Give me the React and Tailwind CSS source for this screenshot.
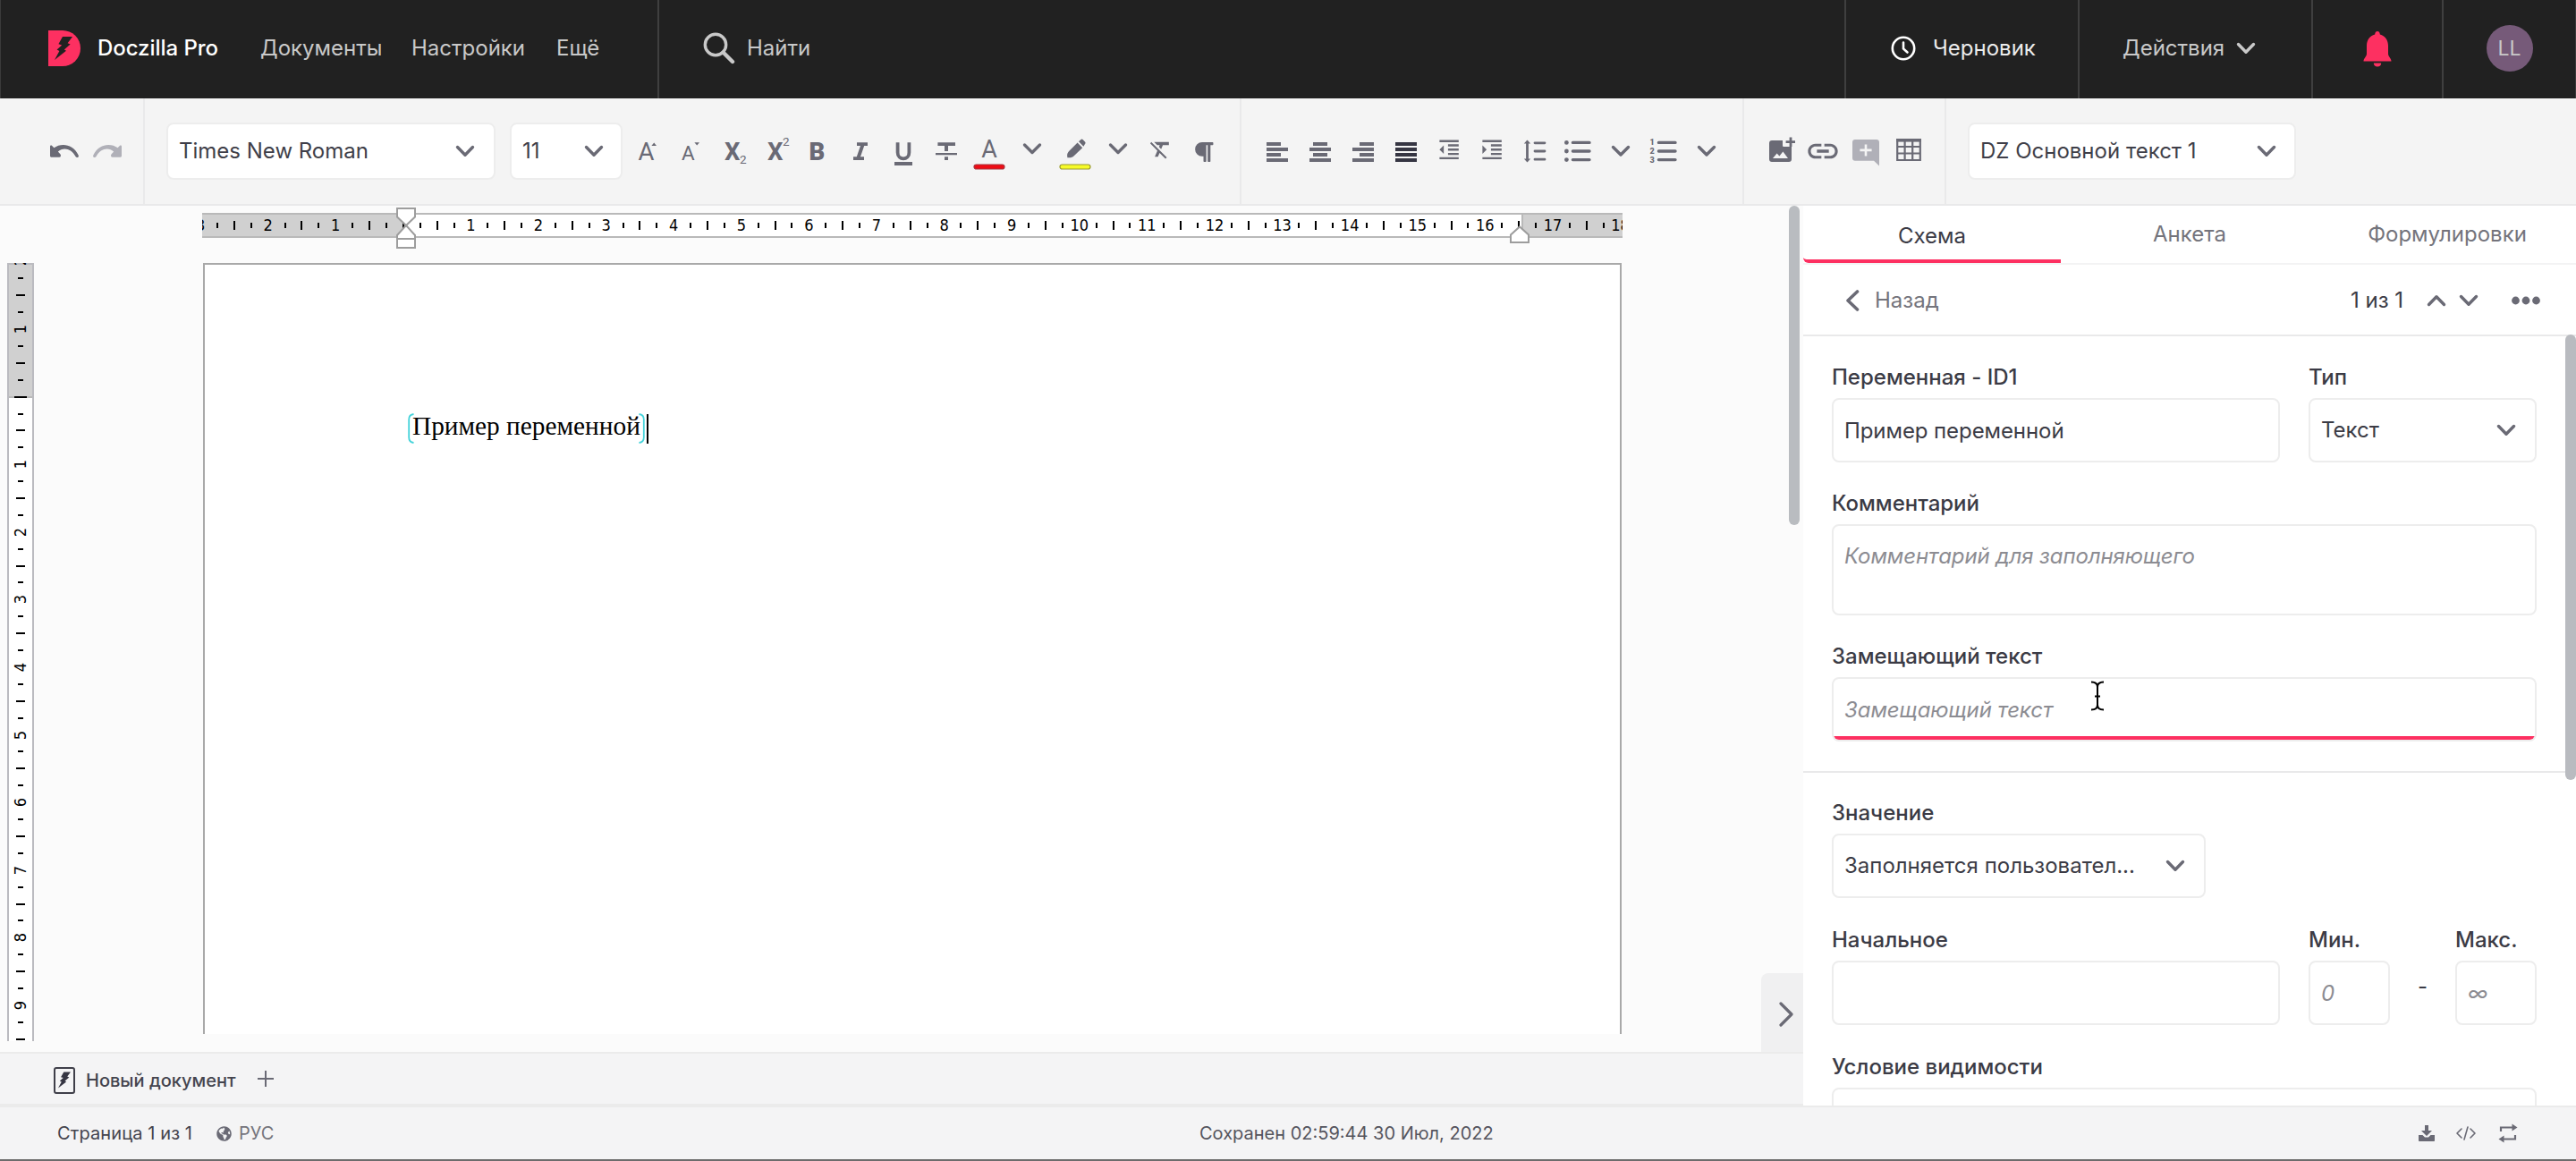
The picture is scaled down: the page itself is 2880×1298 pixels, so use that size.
import React from "react";
import { MdFormatClear, MdFormatIndentDecrease, MdFormatIndentIncrease, MdLink } from "react-icons/md";
import { FaParagraph, FaGlobeAmericas } from "react-icons/fa";

function Chevron({ dir = "down", className = "w-[22px] h-[14px]" }) {
    const d = {
        down: "M2.5 2.5L11 11.2L19.5 2.5",
        up: "M2.5 11.5L11 2.8L19.5 11.5",
    }[dir];
    return (
        <svg viewBox="0 0 22 14" className={`${className} shrink-0`} fill="none" stroke="currentColor" strokeWidth="3.4" strokeLinecap="round" strokeLinejoin="round">
            <path d={d} />
        </svg>
    );
}

function Tool({ children, className = "text-[#6a6a75]" }) {
    return (
        <button className={`w-12 h-12 shrink-0 ${className}`}>
            <svg viewBox="0 0 48 48" className="w-12 h-12 block" fill="currentColor">
                {children}
            </svg>
        </button>
    );
}

function Letter({ x, y, size, weight = 400, children }) {
    return (
        <text x={x} y={y} fontSize={size} fontWeight={weight} fontFamily="Roboto, sans-serif">
            {children}
        </text>
    );
}

function ToolChevron({ y = 24 }) {
    return (
        <Tool>
            <path d={`M15.5 ${y - 5}L24 ${y + 3.5}L32.5 ${y - 5}`} fill="none" stroke="currentColor" strokeWidth="3.4" strokeLinecap="round" strokeLinejoin="round" />
        </Tool>
    );
}

function Bars({ rows }) {
    return rows.map(([x, w], i) => <rect key={i} x={x} y={14 + i * 6} width={w} height="4" />);
}

function Bolt({ className }) {
    return (
        <svg viewBox="0 0 20 26" className={className} fill="currentColor">
            <path d="M9 0L20 0L14.6 7.2L17.6 8.6L10.8 14.4L13 15.8L0 26L5.4 16L2.6 14.4L8.2 9.4L4.4 8.2Z" />
        </svg>
    );
}

const UNDO = "M8 18.7C8 17.5 9.4 17.2 10.2 18L12.4 20.2C20 14.7 33.5 15.2 39.7 28.4C40.7 30.8 37.7 32.2 36.5 30C31.6 20.8 22.6 19.2 16.8 24.6L19.4 27.2C20.6 28.6 20 30.7 18.2 30.7H9.6C8.6 30.7 8 30 8 29.2Z";

function Header() {
    return (
        <header className="h-[110px] shrink-0 bg-[#212121] text-[#c9c9c9] text-2xl flex border-x border-[#3a3a3a]">
            <div className="w-[736px] border-r-2 border-[#3f3f3f] flex items-center pl-[53px]">
                <div className="w-9 h-10 bg-[#fd3061] rounded-r-[20px] mr-[19px] -mt-[2px] flex items-center justify-center text-[#212121]">
                    <Bolt className="w-5 h-[26px] -ml-[3px]" />
                </div>
                <div className="w-[182px] text-white font-medium tracking-[-0.05px] -mt-[2px]">Doczilla Pro</div>
                <nav className="flex -mt-[2px]">
                    <div className="w-[169px]">Документы</div>
                    <div className="w-[162px]">Настройки</div>
                    <div>Ещё</div>
                </nav>
            </div>
            <div className="flex-1 flex items-center pl-[49px] pb-[2px]">
                <svg viewBox="0 0 36 36" className="w-9 h-9 mr-[13px]" fill="none" stroke="currentColor" strokeWidth="3.4" strokeLinecap="round">
                    <circle cx="14" cy="14" r="11.7" />
                    <path d="M22.5 22.5L33 33" strokeWidth="4.4" />
                </svg>
                Найти
            </div>
            <div className="w-[261px] border-l-2 border-[#3f3f3f] flex items-center pl-[50px] pb-[2px] text-[#ececec]">
                <svg viewBox="0 0 28 28" className="w-7 h-7 mr-[19px]" fill="none" stroke="white" strokeWidth="2.6" strokeLinecap="round">
                    <circle cx="14" cy="14" r="12.2" />
                    <path d="M14 7.5V14.5L18.5 18.5" />
                </svg>
                Черновик
            </div>
            <div className="w-[261px] border-l-2 border-[#3f3f3f] flex items-center pl-12 pb-[2px]">
                <span className="w-[127px]">Действия</span>
                <Chevron />
            </div>
            <div className="w-[146px] border-l-2 border-[#3f3f3f] flex items-center justify-center">
                <svg viewBox="0 0 32 40" className="w-8 h-10 text-[#fd3061]" fill="currentColor">
                    <path d="M16 0C17.8 0 18.8 1.6 18.8 3.6C24.6 5 28 10 28 16V25C28 28.5 31.5 30 31.5 33.6H0.5C0.5 30 4 28.5 4 25V16C4 10 7.4 5 13.2 3.6C13.2 1.6 14.2 0 16 0Z" />
                    <path d="M11.8 35.6H20.2C20.2 38 18.4 39.6 16 39.6S11.8 38 11.8 35.6Z" />
                </svg>
            </div>
            <div className="w-[149px] border-l-2 border-[#3f3f3f] flex items-center justify-center pb-[2px]">
                <div className="w-[52px] h-[52px] rounded-full bg-[#765a79] flex items-center justify-center text-[23px]">LL</div>
            </div>
        </header>
    );
}

function ToolbarSelect({ value, className }) {
    return (
        <div className={`h-[64px] bg-white border-2 border-[#ededed] rounded-[8px] flex items-center justify-between pl-3 text-2xl text-[#3f3f49] ${className}`}>
            <span>{value}</span>
            <Chevron className="w-[22px] h-[14px] text-[#6a6a75]" />
        </div>
    );
}

function Toolbar() {
    return (
        <div className="h-[120px] shrink-0 bg-[#f4f4f4] border-b-2 border-[#e9e9ea] flex items-stretch">
            <div className="w-[162px] border-r-2 border-[#e9e9ea] flex items-center pl-12">
                <Tool>
                    <path d={UNDO} />
                </Tool>
                <Tool className="text-[#b0b0b8]">
                    <path transform="translate(48 0) scale(-1 1)" d={UNDO} />
                </Tool>
            </div>
            <div className="w-[1226px] border-r-2 border-[#e9e9ea] flex items-center pl-6">
                <ToolbarSelect value="Times New Roman" className="w-[368px] mr-4 pr-[21px]" />
                <ToolbarSelect value="11" className="w-[126px] mr-[2px] pr-[19px]" />
                <Tool>
                    <Letter x="15.4" y="34" size="27.5">A</Letter>
                    <path d="M33.2 14.6L36 18H30.4Z" />
                </Tool>
                <Tool>
                    <Letter x="16" y="34" size="22.5">A</Letter>
                    <path d="M33.2 17.6L36 14.2H30.4Z" />
                </Tool>
                <Tool>
                    <Letter x="16" y="34" size="27.5" weight="700">X</Letter>
                    <Letter x="33" y="37.6" size="13.5">2</Letter>
                </Tool>
                <Tool>
                    <Letter x="16" y="34" size="27.5" weight="700">X</Letter>
                    <Letter x="33" y="17.8" size="13.5">2</Letter>
                </Tool>
                <Tool>
                    <Letter x="14.5" y="34" size="27.5" weight="900">B</Letter>
                </Tool>
                <Tool>
                    <path d="M20 14.2H32V18H28.2L24 30.2H28V34H16V30.2H19.8L24 18H20Z" />
                </Tool>
                <Tool>
                    <path d="M17.6 14.2V25.5C17.6 34.6 30.4 34.6 30.4 25.5V14.2" fill="none" stroke="currentColor" strokeWidth="3.8" />
                    <rect x="14" y="36" width="20" height="4" />
                </Tool>
                <Tool>
                    <path d="M14.4 14.2H34V18H26V24H22V18H14.4ZM12 26H36V28.2H12ZM22 30.2H26V34H22Z" />
                </Tool>
                <Tool>
                    <Letter x="15.2" y="30.6" size="27">A</Letter>
                    <rect x="7" y="39" width="34" height="5" rx="2.5" fill="#ee0c14" stroke="#a8323c" strokeWidth="1.2" />
                </Tool>
                <ToolChevron y={22} />
                <Tool>
                    <path d="M15.4 31.2C14.6 27.5 15.4 25.6 17.6 23.4L26.6 14.6L32.2 20.2L23 29C20.4 31.4 18.6 31.6 15.4 31.2Z" />
                    <path d="M28 13.2L30.2 11.2C31 10.4 32 10.4 32.8 11.2L35 13.4C35.8 14.2 35.8 15.2 35 16L33.4 18.8Z" />
                    <rect x="7" y="39" width="34" height="5" rx="2.5" fill="#f6fa28" stroke="#9a9a2c" strokeWidth="1.2" />
                </Tool>
                <ToolChevron y={22} />
                <Tool>
                    <MdFormatClear x="9.5" y="8" size="28" />
                </Tool>
                <Tool>
                    <FaParagraph x="11" y="12.5" size="25" />
                </Tool>
            </div>
            <div className="w-[562px] border-r-2 border-[#e9e9ea] flex items-center pl-4">
                <Tool><Bars rows={[[12, 16], [12, 24], [12, 16], [12, 24]]} /></Tool>
                <Tool><Bars rows={[[16, 16], [12, 24], [16, 16], [12, 24]]} /></Tool>
                <Tool><Bars rows={[[20, 16], [12, 24], [20, 16], [12, 24]]} /></Tool>
                <Tool className="text-[#353542]"><Bars rows={[[12, 24], [12, 24], [12, 24], [12, 24]]} /></Tool>
                <Tool><MdFormatIndentDecrease x="9.8" y="8" size="28.6" /></Tool>
                <Tool><MdFormatIndentIncrease x="9.8" y="8" size="28.6" /></Tool>
                <Tool>
                    <path d="M15.5 14V34M24 14.8H35M24 24H35M24 33.2H35" stroke="currentColor" strokeWidth="2.8" strokeLinecap="round" />
                    <path d="M15.5 11.6L19.2 15.6H11.8ZM15.5 36.4L19.2 32.4H11.8Z" />
                </Tool>
                <Tool>
                    <circle cx="11.4" cy="14.4" r="2.4" />
                    <circle cx="11.4" cy="24" r="2.4" />
                    <circle cx="11.4" cy="33.6" r="2.4" />
                    <path d="M18.4 14.4H37M18.4 24H37M18.4 33.6H37" stroke="currentColor" strokeWidth="3.4" strokeLinecap="round" />
                </Tool>
                <ToolChevron y={24.5} />
                <Tool>
                    <Letter x="8.6" y="17" size="9" weight="900">1</Letter>
                    <Letter x="8.6" y="27" size="9" weight="900">2</Letter>
                    <Letter x="8.6" y="37" size="9" weight="900">3</Letter>
                    <path d="M18.4 14.4H37M18.4 24H37M18.4 33.6H37" stroke="currentColor" strokeWidth="3.4" strokeLinecap="round" />
                </Tool>
                <ToolChevron y={24.5} />
            </div>
            <div className="w-[226px] border-r-2 border-[#e9e9ea] flex items-center pl-4">
                <Tool>
                    <path fillRule="evenodd" d="M15 12H27V17.5C27 18.5 27.6 19 28.6 19H37V33C37 34.8 35.8 36 34 36H15C13.2 36 12 34.8 12 33V15C12 13.2 13.2 12 15 12ZM16 32H33L27.4 24.6L23.4 29.6L20.6 26.4Z" />
                    <path d="M36 8.5V19M30.6 13.6H41" stroke="currentColor" strokeWidth="2.8" />
                </Tool>
                <Tool><MdLink x="4" y="4" size="40" /></Tool>
                <Tool className="text-[#b0b0b8]">
                    <path fillRule="evenodd" d="M12 11H36C37.8 11 39 12.2 39 14V40.5L33 34.8H12C10.2 34.8 9 33.6 9 31.8V14C9 12.2 10.2 11 12 11ZM22.7 16.5V21.6H17.4V24.2H22.7V29.4H25.3V24.2H30.6V21.6H25.3V16.5Z" />
                </Tool>
                <Tool>
                    <path d="M11.2 11.2H36.8V34H11.2ZM11.2 19H36.8M11.2 26.5H36.8M19.6 11.2V34M28.2 11.2V34" fill="none" stroke="currentColor" strokeWidth="2.2" />
                    <rect x="10" y="10" width="28" height="3.6" />
                </Tool>
            </div>
            <div className="flex items-center pl-6">
                <ToolbarSelect value="DZ Основной текст 1" className="w-[367px] pr-5" />
            </div>
        </div>
    );
}

const H_MARKS = Array.from({ length: 22 }, (_, i) => i - 3);
const V_MARKS = Array.from({ length: 12 }, (_, i) => i - 2);

function HorizontalRuler() {
    return (
        <div className="relative ml-[226px] mt-2 w-[1588px] h-7">
            <div className="h-7 flex overflow-hidden border-y-2 border-[#b9b9b9] bg-[linear-gradient(to_right,#d0d0d0_228px,#fff_228px,#fff_1475px,#b9b9b9_1475px,#b9b9b9_1477px,#d0d0d0_1477px)]">
                <div className="flex items-center shrink-0 -ml-[11.4px] text-lg leading-6 text-black font-['DejaVu_Sans_Condensed','DejaVu_Sans',sans-serif] [font-stretch:condensed]">
                    {H_MARKS.map((n) => (
                        <div key={n} className="flex items-center w-[75.6px] shrink-0 h-6">
                            <span className="w-[18.9px] flex justify-center">
                                {n === 0 ? <i className="w-[2px] h-[10px] bg-black" /> : Math.abs(n)}
                            </span>
                            <span className="w-[18.9px] flex justify-center"><i className="w-[2px] h-[6px] bg-black" /></span>
                            <span className="w-[18.9px] flex justify-center"><i className="w-[2px] h-[10px] bg-black" /></span>
                            <span className="w-[18.9px] flex justify-center"><i className="w-[2px] h-[6px] bg-black" /></span>
                        </div>
                    ))}
                </div>
            </div>
            <svg viewBox="0 0 22 46" className="absolute left-[217px] -top-[6px] w-[22px] h-[46px]" fill="white" stroke="#9d9d9d" strokeWidth="2">
                <path d="M1 1H21V10.5L11 20L1 10.5Z" />
                <path d="M11 20L21 31V35H1V31Z" />
                <path d="M1 35H21V45H1Z" />
            </svg>
            <svg viewBox="0 0 22 20" className="absolute left-[1462px] top-[14px] w-[22px] h-5" fill="white" stroke="#9d9d9d" strokeWidth="2">
                <path d="M11 1.4L21 10.5V19H1V10.5Z" />
            </svg>
        </div>
    );
}

function VerticalRuler() {
    return (
        <div className="ml-2 w-[30px] h-[870px] shrink-0 overflow-hidden border-x-2 border-[#bbbbc0] bg-[linear-gradient(#bbbbc0_2px,#d0d0d0_2px,#d0d0d0_149px,#b9b9b9_149px,#b9b9b9_151px,#fff_151px)]">
            <div className="-mt-[11px] text-lg text-black font-['DejaVu_Sans_Condensed','DejaVu_Sans',sans-serif] [font-stretch:condensed]">
                {V_MARKS.map((n) => (
                    <div key={n} className="h-[75.6px]">
                        <div className="h-[18.9px] flex items-center justify-center">
                            {n === 0 ? <i className="h-[2px] w-[14px] bg-black" /> : <span className="-rotate-90 leading-none">{Math.abs(n)}</span>}
                        </div>
                        <div className="h-[18.9px] flex items-center justify-center"><i className="h-[2px] w-[6px] bg-black" /></div>
                        <div className="h-[18.9px] flex items-center justify-center"><i className="h-[2px] w-[10px] bg-black" /></div>
                        <div className="h-[18.9px] flex items-center justify-center"><i className="h-[2px] w-[6px] bg-black" /></div>
                    </div>
                ))}
            </div>
        </div>
    );
}

function Page() {
    return (
        <div className="ml-[189px] w-[1586px] h-[862px] bg-white border-2 border-b-0 border-[#a9a9a9] pl-[227px] pt-[166px]">
            <div className="flex items-center h-[34px] font-['Liberation_Serif',serif] text-[29.33px] text-black whitespace-nowrap">
                <svg viewBox="0 0 7 34" className="w-[7px] h-[34px] -mr-[2px] shrink-0" fill="none" stroke="#45d3da" strokeWidth="1.8">
                    <path d="M6.5 1C3 1.4 1.2 3.6 1.2 7V27C1.2 30.4 3 32.6 6.5 33" />
                </svg>
                <span className="-mt-1">Пример переменной</span>
                <svg viewBox="0 0 7 34" className="w-[7px] h-[34px] -ml-[2px] shrink-0" fill="none" stroke="#45d3da" strokeWidth="1.8">
                    <path d="M0.5 1C4 1.4 5.8 3.6 5.8 7V27C5.8 30.4 4 32.6 0.5 33" />
                </svg>
                <span className="w-[2px] h-[33px] bg-black ml-[2px]" />
            </div>
        </div>
    );
}

function Editor() {
    return (
        <div className="relative w-[2016px] shrink-0 flex flex-col">
            <div className="h-[946px] shrink-0 overflow-hidden bg-[#fbfbfb]">
                <HorizontalRuler />
                <div className="flex mt-7">
                    <VerticalRuler />
                    <Page />
                </div>
            </div>
            <div className="h-[60px] shrink-0 bg-[#f4f4f5] border-y-2 border-[#ebebeb] flex items-center pl-[60px] pt-[3px] text-[20px] font-medium text-[#44444e]">
                <div className="w-6 h-[30px] rounded-[3px] border-2 border-[#3f3f49] flex items-center justify-center mr-3 text-[#353542]">
                    <Bolt className="w-[14px] h-[19px]" />
                </div>
                <span className="w-[192px]">Новый документ</span>
                <svg viewBox="0 0 18 18" className="w-[18px] h-[18px] -mt-1" stroke="#6a6a75" strokeWidth="2">
                    <path d="M9 0V18M0 9H18" />
                </svg>
            </div>
            <div className="absolute left-[2000px] top-0 w-3 h-[357px] rounded-full bg-[#b9bcc0]" />
            <div className="absolute left-[1969px] top-[858px] w-[47px] h-[88px] rounded-tl-[8px] bg-[#f0f0f1] text-[#6a6a75]">
                <svg viewBox="0 0 16 28" className="absolute left-5 top-8 w-4 h-7" fill="none" stroke="currentColor" strokeWidth="3.2" strokeLinecap="round" strokeLinejoin="round">
                    <path d="M2 2L14 14L2 26" />
                </svg>
            </div>
        </div>
    );
}

function Field({ label, className = "", children }) {
    return (
        <div className={className}>
            <div className="h-8 leading-8 mb-[7px] font-medium whitespace-nowrap">{label}</div>
            {children}
        </div>
    );
}

const BOX = "block h-[72px] w-full border-2 border-[#ededed] rounded-[8px] pl-3 tracking-[-0.08px] outline-none bg-white placeholder:italic placeholder:text-[#8c8c92]";

function Select({ value, className = "" }) {
    return (
        <div className={`h-[72px] border-2 border-[#ededed] rounded-[8px] pl-3 pr-[21px] flex items-center justify-between ${className}`}>
            <span>{value}</span>
            <Chevron className="w-[22px] h-[14px] text-[#6a6a75]" />
        </div>
    );
}

function SidePanel() {
    return (
        <aside className="relative flex-1 h-[1006px] overflow-hidden bg-white text-2xl text-[#3b3b45]">
            <div className="flex h-[66px] border-b-2 border-[#f3f3f4] text-[#74747c] text-center leading-[64px]">
                <div className="w-72 border-b-4 border-[#fd3061] rounded-bl-[6px] leading-[67px] text-[#3b3b45]">Схема</div>
                <div className="w-72">Анкета</div>
                <div className="w-72">Формулировки</div>
            </div>
            <div className="h-20 border-b-2 border-[#e9e9ea] flex items-center pl-[47px] pr-10 pt-[2px] text-[#74747c]">
                <svg viewBox="0 0 16 26" className="w-4 h-[26px] mr-[17px] text-[#6a6a75]" fill="none" stroke="currentColor" strokeWidth="3.6" strokeLinecap="round" strokeLinejoin="round">
                    <path d="M13.5 3L3 13L13.5 23" />
                </svg>
                <span className="flex-1">Назад</span>
                <span className="text-[#3b3b45] mr-[26px]">1 из 1</span>
                <Chevron dir="up" className="w-[22px] h-[14px] mr-[14px] text-[#6a6a75]" />
                <Chevron className="w-[22px] h-[14px] mr-[37px] text-[#6a6a75]" />
                <svg viewBox="0 0 32 10" className="w-8 h-[10px]" fill="#6a6a75">
                    <circle cx="4.5" cy="5" r="4.4" />
                    <circle cx="16" cy="5" r="4.4" />
                    <circle cx="27.5" cy="5" r="4.4" />
                </svg>
            </div>
            <div className="relative h-[488px] border-b-2 border-[#e9e9ea] pl-8 pr-[44px] pt-[30px]">
                <div className="flex justify-between">
                    <Field label="Переменная - ID1" className="w-[501px]">
                        <input className={BOX} defaultValue="Пример переменной" />
                    </Field>
                    <Field label="Тип" className="w-[255px]">
                        <Select value="Текст" />
                    </Field>
                </div>
                <Field label="Комментарий" className="mt-[30px]">
                    <textarea className="block h-[102px] w-full border-2 border-[#ededed] rounded-[8px] pl-3 pt-[18px] tracking-[-0.08px] resize-none outline-none leading-8 placeholder:italic placeholder:text-[#8c8c92]" placeholder="Комментарий для заполняющего" />
                </Field>
                <Field label="Замещающий текст" className="mt-[30px]">
                    <div className="h-[72px] border-2 border-[#ededed] rounded-[8px] overflow-hidden">
                        <input className="block w-full h-[68px] pl-3 pt-1 tracking-[-0.08px] border-b-4 border-[#fd3061] outline-none placeholder:italic placeholder:text-[#8c8c92]" placeholder="Замещающий текст" />
                    </div>
                </Field>
                <svg viewBox="0 0 16 34" className="absolute left-[321px] top-[385px] w-4 h-[34px]" fill="none" stroke="black" strokeWidth="2">
                    <path d="M1 1.5C5 1.5 8 3 8 7V27C8 31 5 32.5 1 32.5M15 1.5C11 1.5 8 3 8 7M8 27C8 31 11 32.5 15 32.5M5 17.5H11" />
                </svg>
            </div>
            <div className="pl-8 pr-[44px] pt-[29px]">
                <Field label="Значение">
                    <Select value="Заполняется пользовател..." className="w-[418px]" />
                </Field>
                <div className="flex mt-[31px]">
                    <Field label="Начальное" className="w-[501px]">
                        <input className={BOX} />
                    </Field>
                    <Field label="Мин." className="w-[91px] ml-8">
                        <input className={BOX} placeholder="0" />
                    </Field>
                    <div className="w-[73px] pt-[52px] text-center">-</div>
                    <Field label="Макс." className="w-[91px]">
                        <input className={BOX} placeholder="∞" />
                    </Field>
                </div>
                <Field label="Условие видимости" className="mt-[31px]">
                    <input className={BOX} />
                </Field>
            </div>
            <div className="absolute right-0 top-[144px] w-3 h-[498px] rounded-full bg-[#b9bbc0]" />
        </aside>
    );
}

function StatusBar() {
    return (
        <footer className="h-[62px] shrink-0 bg-[#f4f4f5] border-t-2 border-t-[#ebebeb] border-b-2 border-b-[#6c6c6c] flex items-center text-[20px] text-[#44444e]">
            <div className="w-[1341px] flex items-center pl-16">
                <span className="w-[178px] tracking-[0.1px]">Страница 1 из 1</span>
                <FaGlobeAmericas className="w-[17px] h-[17px] mr-2 text-[#6a6a75]" />
                <span className="text-[#74747c]">РУС</span>
            </div>
            <div className="text-[#55555e]">Сохранен 02:59:44 30 Июл, 2022</div>
            <div className="flex-1 flex items-center justify-end pr-[65px] text-[#6a6a75]">
                <svg viewBox="0 0 20 20" className="w-5 h-5 mr-[23px]" fill="currentColor">
                    <path d="M8 1H12V7H16L10 13L4 7H8Z" />
                    <path d="M1 12H5.5L8 14.5H12L14.5 12H19V18C19 18.6 18.6 19 18 19H2C1.4 19 1 18.6 1 18Z" />
                </svg>
                <svg viewBox="0 0 22 16" className="w-[22px] h-4 mr-[25px]" fill="none" stroke="currentColor" strokeWidth="1.6" strokeLinecap="round" strokeLinejoin="round">
                    <path d="M6 3L1 8L6 13M16 3L21 8L16 13M13 1L9 15" />
                </svg>
                <svg viewBox="0 0 22 24" className="w-[22px] h-6" fill="none" stroke="currentColor" strokeWidth="2.2">
                    <path d="M3 10V5.5H17M19 14V18.5H5" />
                    <path d="M15.5 1.5L21.5 5.5L15.5 9.5ZM6.5 14.5L0.5 18.5L6.5 22.5Z" fill="currentColor" stroke="none" />
                </svg>
            </div>
        </footer>
    );
}

export default function App() {
    return (
        <div className="w-[2880px] h-[1298px] overflow-hidden flex flex-col bg-[#fbfbfb] font-['Inter',sans-serif]">
            <Header />
            <Toolbar />
            <div className="h-[1006px] shrink-0 flex">
                <Editor />
                <SidePanel />
            </div>
            <StatusBar />
        </div>
    );
}
